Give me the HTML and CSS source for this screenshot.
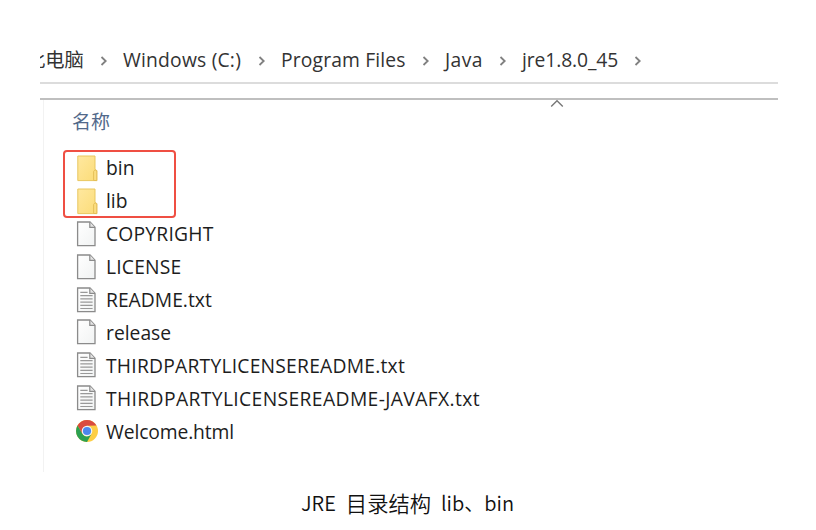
FILE: index.html
```html
<!DOCTYPE html>
<html lang="zh-CN">
<head>
<meta charset="utf-8">
<title>JRE 目录结构</title>
<link rel="stylesheet" href="styles.css">
</head>
<body>
<svg width="0" height="0" class="defs">
  <defs>
    <linearGradient id="gold" x1="0" y1="0" x2="1" y2="1"><stop offset="0" stop-color="#ffe89f"/><stop offset="1" stop-color="#fbdc78"/></linearGradient>
    <linearGradient id="paper" x1="0" y1="0" x2="1" y2="1"><stop offset="0" stop-color="#ffffff"/><stop offset="1" stop-color="#f1f3f3"/></linearGradient>
    <symbol id="folder" viewBox="0 0 24 28">
      <path d="M2.8 2H20V15.5L21.8 16.5V26.6H2.8Z" fill="url(#gold)" stroke="#e9c75f"/>
      <path d="M18.6 26.4V17.4L20 15.8L21.8 16.8V26.6Z" fill="#fbdd80" stroke="#e2bc55" stroke-width=".9"/>
    </symbol>
    <symbol id="file" viewBox="0 0 24 28">
      <path d="M2.6 2H15L20 7.2V25.6H2.6Z" fill="url(#paper)" stroke="#8b8b8b" stroke-width="1.3"/>
      <path d="M14.8 2V7.4H20" fill="#e4e4e4" stroke="#8b8b8b" stroke-width="1.2"/>
    </symbol>
    <symbol id="text" viewBox="0 0 24 28">
      <use href="#file"/>
      <path d="M5.3 6.4H12.6M5.3 9.7H17.6M5.3 12.9H17.6M5.3 16.1H17.6M5.3 19.3H17.6M5.3 22.5H17.6" stroke="#999" stroke-width="1.2"/>
    </symbol>
    <symbol id="chrome" viewBox="0 0 24 24">
      <circle cx="12" cy="12" r="11" fill="#fdce45"/>
      <path d="M12 12L7.2 14.8L2.5 6.5A11 11 0 0 1 21.5 6.5L12 6.8Z" fill="#d94b3f"/>
      <path d="M2.5 6.5L7.3 14.7Q9 17.4 12 17.4L16.3 15.2L12 23A11 11 0 0 1 2.5 6.5Z" fill="#2ba052"/>
      <circle cx="12" cy="12" r="5.3" fill="#f3f4f3"/>
      <circle cx="12" cy="12" r="4.1" fill="#4b87ed"/>
    </symbol>
    <symbol id="next" viewBox="0 0 8 10"><path d="M1.5 1L5.7 5L1.5 9" fill="none" stroke="#808080" stroke-width="1.8"/></symbol>
  </defs>
</svg>
<main class="page">
  <section class="explorer">
    <nav class="path">
      <span class="crumb crumb-pc">此电脑</span><svg class="sep"><use href="#next"/></svg>
      <span class="crumb crumb-drive">Windows (C:)</span><svg class="sep"><use href="#next"/></svg>
      <span class="crumb crumb-programs">Program Files</span><svg class="sep"><use href="#next"/></svg>
      <span class="crumb crumb-java">Java</span><svg class="sep"><use href="#next"/></svg>
      <span class="crumb crumb-jre">jre1.8.0_45</span><svg class="sep"><use href="#next"/></svg>
    </nav>
    <div class="gap"></div>
    <div class="listing">
      <header class="column">
        <span>名称</span>
        <svg class="sort" viewBox="0 0 14 9"><path d="M1.2 7.6L7 1.8L12.8 7.6" fill="none" stroke="#777" stroke-width="1.4"/></svg>
      </header>
      <ul class="files">
        <li><svg class="icon"><use href="#folder"/></svg><span>bin</span></li>
        <li><svg class="icon"><use href="#folder"/></svg><span>lib</span></li>
        <li><svg class="icon"><use href="#file"/></svg><span class="caps">COPYRIGHT</span></li>
        <li><svg class="icon"><use href="#file"/></svg><span class="caps">LICENSE</span></li>
        <li><svg class="icon"><use href="#text"/></svg><span>README.txt</span></li>
        <li><svg class="icon"><use href="#file"/></svg><span>release</span></li>
        <li><svg class="icon"><use href="#text"/></svg><span class="long">THIRDPARTYLICENSEREADME.txt</span></li>
        <li><svg class="icon"><use href="#text"/></svg><span class="longest">THIRDPARTYLICENSEREADME-JAVAFX.txt</span></li>
        <li><svg class="icon chrome"><use href="#chrome"/></svg><span class="tight">Welcome.html</span></li>
        <li class="marker"></li>
      </ul>
    </div>
  </section>
  <p class="caption"><span>JRE</span><span class="zh">目录结构</span><span>lib、bin</span></p>
</main>
</body>
</html>
```
FILE: styles.css
```css
* { box-sizing: border-box; }
body { margin: 0; background: #fff; color: #222; font-family: "Open Sans", "Noto Sans CJK SC", sans-serif; font-size: 19.3px; }
.defs { position: absolute; }
.page { height: 530px; padding-top: 38px; overflow: hidden; }
.explorer { width: 738px; height: 434px; margin-left: 40px; overflow: hidden; }
.path { display: flex; align-items: center; height: 46px; border-bottom: 2px solid #dcdcdc; white-space: nowrap; }
.crumb { flex: none; line-height: 44px; color: #333; }
.crumb-pc { width: 74px; margin-left: -14px; }
.crumb-drive { width: 135px; letter-spacing: .2px; }
.crumb-programs { width: 141px; letter-spacing: .15px; }
.crumb-java { width: 54px; letter-spacing: .4px; }
.crumb-jre { width: 112px; letter-spacing: -.1px; }
.sep { flex: none; width: 8px; height: 10px; margin: 2px 15px 0 0; }
.gap { height: 16px; border-bottom: 2px solid #bfbfbf; }
.listing { height: 372px; margin-left: 3px; border-left: 1px solid #f2f2f2; }
.column { position: relative; height: 51px; padding-left: 28px; line-height: 45px; font-size: 19px; color: #52698a; }
.sort { position: absolute; left: 506px; top: -1px; width: 14px; height: 9px; }
.files { position: relative; margin: 0; padding: 1px 0 0 31px; list-style: none; color: #1d1d1d; }
.files li { display: flex; align-items: center; height: 32.9px; line-height: 32px; white-space: nowrap; }
.caps { letter-spacing: .2px; }
.long { letter-spacing: .22px; }
.longest { letter-spacing: .37px; }
.tight { letter-spacing: -.12px; }
.icon { flex: none; width: 24px; height: 28px; margin: -1px 7px 0 0; }
.chrome { height: 24px; }
.files .marker { position: absolute; left: 19px; top: -1px; width: 113px; height: 68px; border: 2px solid #ef4f43; border-radius: 4px; }
.caption { display: flex; gap: 10px; margin: 15px 0 0 301px; font: 350 20px/32px "Noto Sans CJK SC", sans-serif; color: #111; }
.zh { font-size: 21.3px; }
```
